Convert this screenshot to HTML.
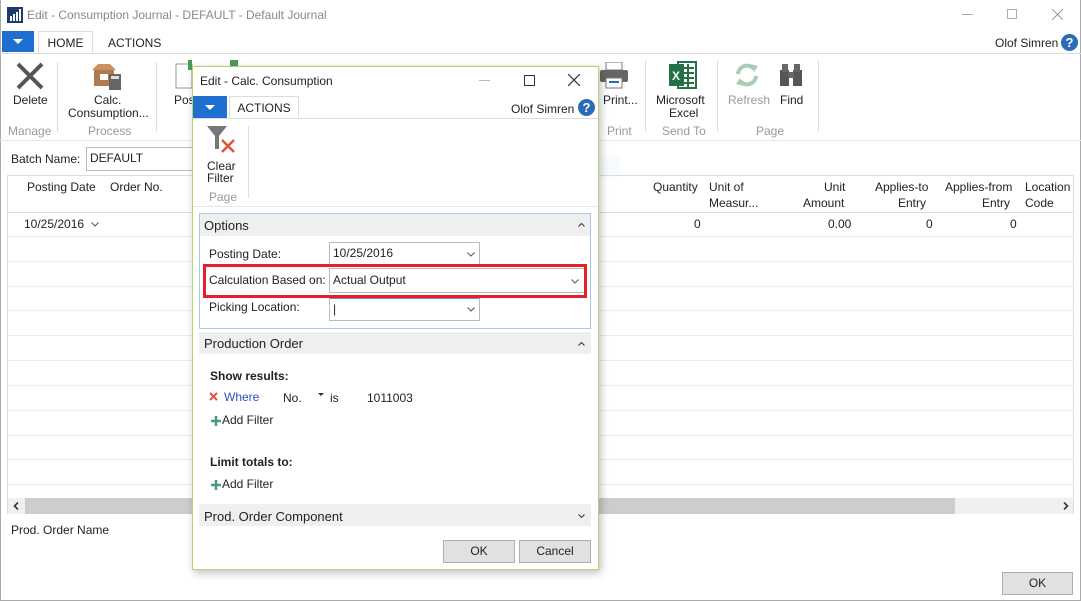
<!DOCTYPE html>
<html><head><meta charset="utf-8"><style>
*{box-sizing:border-box;margin:0;padding:0}
body{width:1081px;height:601px;overflow:hidden;background:#fff;font-family:"Liberation Sans","DejaVu Sans",sans-serif;font-size:12px;color:#222;position:relative}
.a{position:absolute;white-space:nowrap}
.g{color:#999}
.sep{position:absolute;width:1px;background:#ddd}
.hl{position:absolute;height:1px;background:#ececec}
.btn{position:absolute;background:#e1e1e1;border:1px solid #adadad;text-align:center;line-height:20px;font-size:12px}
.inp{position:absolute;border:1px solid #bbb;background:#fff;padding-left:3px;line-height:20px}
svg.dn,svg.up{position:absolute}
</style></head><body>
<div class="a" style="left:0;top:0;width:1081px;height:601px;border:1px solid #aaa;border-top:none"></div>
<svg class="a" style="left:7px;top:7px" width="16" height="16"><rect width="16" height="16" fill="#1e3a6e"/><rect x="3" y="9" width="2" height="5" fill="#fff"/><rect x="6" y="7" width="2" height="7" fill="#fff"/><rect x="9" y="5" width="2" height="9" fill="#fff"/><rect x="12" y="2" width="2" height="12" fill="#fff"/></svg>
<div class="a" style="left:27px;top:8px;font-size:12px;color:#888">Edit - Consumption Journal - DEFAULT - Default Journal</div>
<div class="a" style="left:962px;top:14px;width:11px;height:1px;background:#aaa"></div>
<div class="a" style="left:1007px;top:9px;width:10px;height:10px;border:1px solid #aaa"></div>
<svg class="a" style="left:1052px;top:9px" width="11" height="11"><path d="M0 0L11 11M11 0L0 11" stroke="#999" stroke-width="1"/></svg>
<div class="a" style="left:2px;top:31px;width:32px;height:21px;background:#1e6fcf"></div>
<div class="a" style="left:13px;top:39px;border-left:5px solid transparent;border-right:5px solid transparent;border-top:5px solid #fff"></div>
<div class="a" style="left:38px;top:31px;width:55px;height:23px;border:1px solid #ddd;border-bottom:none;background:#fff;text-align:center;line-height:22px">HOME</div>
<div class="a" style="left:108px;top:36px">ACTIONS</div>
<div class="a" style="left:0;top:53px;width:1081px;height:1px;background:#ddd"></div>
<div class="a" style="left:995px;top:36px">Olof Simren</div>
<div class="a" style="left:1061px;top:34px;width:17px;height:17px;border-radius:50%;background:#2b6cb8;color:#fff;font-weight:bold;text-align:center;line-height:17px;font-size:13px">?</div>
<svg class="a" style="left:15px;top:62px" width="30" height="28"><path d="M3 2 L27 26 M27 2 L3 26" stroke="#555" stroke-width="4"/></svg>
<div class="a" style="left:13px;top:93px">Delete</div>
<div class="a g" style="left:8px;top:124px">Manage</div>
<div class="sep" style="left:57px;top:62px;height:70px"></div>
<svg class="a" style="left:92px;top:62px" width="32" height="28"><rect x="2" y="8" width="20" height="16" fill="#b07a50"/><path d="M0 8 L6 2 L18 2 L24 8Z" fill="#c9915f"/><rect x="8" y="12" width="8" height="6" fill="#fff"/><rect x="17" y="12" width="12" height="16" fill="#666"/><rect x="19" y="14" width="8" height="3" fill="#ddd"/></svg>
<div class="a" style="left:94px;top:93px">Calc.</div>
<div class="a" style="left:68px;top:106px">Consumption...</div>
<div class="a g" style="left:88px;top:124px">Process</div>
<div class="sep" style="left:156px;top:62px;height:70px"></div>
<svg class="a" style="left:175px;top:60px" width="80" height="30"><rect x="1" y="4" width="16" height="24" fill="#fff" stroke="#999"/><rect x="13" y="0" width="4" height="10" fill="#4a9a5a"/><rect x="55" y="0" width="8" height="6" fill="#4a9a5a"/></svg>
<div class="a" style="left:174px;top:93px">Pos</div>
<svg class="a" style="left:598px;top:62px" width="34" height="28"><rect x="8" y="0" width="16" height="8" fill="#fff" stroke="#777"/><rect x="2" y="8" width="28" height="12" rx="2" fill="#666"/><rect x="8" y="16" width="16" height="10" fill="#fff" stroke="#777"/><rect x="11" y="19" width="10" height="2" fill="#2b6cb8"/></svg>
<div class="a" style="left:603px;top:93px">Print...</div>
<div class="a g" style="left:607px;top:124px">Print</div>
<div class="sep" style="left:645px;top:60px;height:72px"></div>
<svg class="a" style="left:668px;top:60px" width="30" height="30"><rect x="10" y="2" width="18" height="26" fill="#fff" stroke="#217346" stroke-width="2"/><path d="M14 8h12M14 13h12M14 18h12M14 23h12M20 4v24" stroke="#217346" stroke-width="2"/><rect x="1" y="4" width="15" height="22" fill="#217346"/><text x="4" y="20" fill="#fff" font-size="12" font-weight="bold" font-family="Liberation Sans">X</text></svg>
<div class="a" style="left:656px;top:93px">Microsoft</div>
<div class="a" style="left:669px;top:106px">Excel</div>
<div class="a g" style="left:662px;top:124px">Send To</div>
<div class="sep" style="left:717px;top:60px;height:72px"></div>
<svg class="a" style="left:733px;top:62px" width="28" height="26"><path d="M5 12 A9 9 0 0 1 21 7 M23 14 A9 9 0 0 1 7 19" stroke="#a8cdb8" stroke-width="4" fill="none"/><path d="M17 2 L25 4 L21 10Z M11 24 L3 22 L7 16Z" fill="#a8cdb8"/></svg>
<div class="a g" style="left:728px;top:93px">Refresh</div>
<svg class="a" style="left:778px;top:62px" width="26" height="26"><rect x="2" y="8" width="9" height="16" fill="#555"/><rect x="15" y="8" width="9" height="16" fill="#555"/><rect x="4" y="2" width="6" height="8" fill="#666"/><rect x="16" y="2" width="6" height="8" fill="#666"/><rect x="10" y="10" width="6" height="6" fill="#666"/></svg>
<div class="a" style="left:780px;top:93px">Find</div>
<div class="a g" style="left:756px;top:124px">Page</div>
<div class="sep" style="left:818px;top:60px;height:72px"></div>
<div class="a" style="left:0;top:140px;width:1081px;height:1px;background:#e6e6e6"></div>
<div class="a" style="left:11px;top:152px">Batch Name:</div>
<div class="inp" style="left:86px;top:147px;width:120px;height:24px">DEFAULT</div>
<div class="a" style="left:468px;top:157px;width:152px;height:20px;background:#f7fbff"></div>
<div class="a" style="left:494px;top:160px;color:#e8eef4">Window Snip</div>
<div class="a" style="left:7px;top:175px;width:1067px;height:339px;border:1px solid #ddd"></div>
<div class="a" style="left:27px;top:180px">Posting Date</div>
<div class="a" style="left:110px;top:180px">Order No.</div>
<div class="a" style="left:653px;top:180px">Quantity</div>
<div class="a" style="left:709px;top:180px">Unit of</div>
<div class="a" style="left:709px;top:196px">Measur...</div>
<div class="a" style="left:824px;top:180px">Unit</div>
<div class="a" style="left:803px;top:196px">Amount</div>
<div class="a" style="left:875px;top:180px">Applies-to</div>
<div class="a" style="left:898px;top:196px">Entry</div>
<div class="a" style="left:945px;top:180px">Applies-from</div>
<div class="a" style="left:982px;top:196px">Entry</div>
<div class="a" style="left:1025px;top:180px">Location</div>
<div class="a" style="left:1025px;top:196px">Code</div>
<div class="a" style="left:8px;top:212px;width:1065px;height:1px;background:#ddd"></div>
<div class="a" style="left:24px;top:217px">10/25/2016</div>
<svg class="dn" style="left:91px;top:222px" width="8" height="5"><path d="M0.5 0.5L4 4L7.5 0.5" stroke="#555" fill="none"/></svg>
<div class="a" style="left:694px;top:217px">0</div>
<div class="a" style="left:828px;top:217px">0.00</div>
<div class="a" style="left:926px;top:217px">0</div>
<div class="a" style="left:1010px;top:217px">0</div>
<div class="hl" style="left:8px;top:236px;width:1065px"></div>
<div class="hl" style="left:8px;top:261px;width:1065px"></div>
<div class="hl" style="left:8px;top:286px;width:1065px"></div>
<div class="hl" style="left:8px;top:310px;width:1065px"></div>
<div class="hl" style="left:8px;top:335px;width:1065px"></div>
<div class="hl" style="left:8px;top:360px;width:1065px"></div>
<div class="hl" style="left:8px;top:385px;width:1065px"></div>
<div class="hl" style="left:8px;top:410px;width:1065px"></div>
<div class="hl" style="left:8px;top:435px;width:1065px"></div>
<div class="hl" style="left:8px;top:459px;width:1065px"></div>
<div class="hl" style="left:8px;top:484px;width:1065px"></div>
<div class="a" style="left:8px;top:498px;width:1065px;height:16px;background:#f0f0f0"></div>
<div class="a" style="left:25px;top:498px;width:930px;height:16px;background:#cdcdcd"></div>
<svg class="a" style="left:13px;top:502px" width="6" height="8"><path d="M5 0.5L1.5 4L5 7.5" stroke="#333" stroke-width="1.6" fill="none"/></svg>
<svg class="a" style="left:1063px;top:502px" width="6" height="8"><path d="M1 0.5L4.5 4L1 7.5" stroke="#333" stroke-width="1.6" fill="none"/></svg>
<div class="a" style="left:11px;top:523px">Prod. Order Name</div>
<div class="btn" style="left:1002px;top:572px;width:71px;height:23px">OK</div>

<div class="a" style="left:192px;top:66px;width:407px;height:504px;background:#fff;border:1px solid #b5d56a;box-shadow:2px 3px 8px rgba(0,0,0,.25)"></div>
<div class="a" style="left:200px;top:74px;font-size:12px">Edit - Calc. Consumption</div>
<div class="a" style="left:479px;top:80px;width:11px;height:1px;background:#bbb"></div>
<div class="a" style="left:524px;top:75px;width:11px;height:11px;border:1px solid #333"></div>
<svg class="a" style="left:568px;top:74px" width="12" height="12"><path d="M0 0L12 12M12 0L0 12" stroke="#333" stroke-width="1.2"/></svg>
<div class="a" style="left:193px;top:96px;width:34px;height:22px;background:#1e6fcf"></div>
<div class="a" style="left:205px;top:105px;border-left:5px solid transparent;border-right:5px solid transparent;border-top:5px solid #fff"></div>
<div class="a" style="left:229px;top:96px;width:70px;height:23px;border:1px solid #ddd;border-bottom:none;background:#fff;text-align:center;line-height:22px">ACTIONS</div>
<div class="a" style="left:193px;top:118px;width:405px;height:1px;background:#ddd"></div>
<div class="a" style="left:511px;top:102px">Olof Simren</div>
<div class="a" style="left:578px;top:99px;width:17px;height:17px;border-radius:50%;background:#2b6cb8;color:#fff;font-weight:bold;text-align:center;line-height:17px;font-size:13px">?</div>
<svg class="a" style="left:206px;top:125px" width="32" height="32"><path d="M1 1 H21 L13 11 V24 H9 V11Z" fill="#777"/><path d="M16 15 L28 27 M28 15 L16 27" stroke="#e0553a" stroke-width="2.5"/></svg>
<div class="a" style="left:207px;top:159px">Clear</div>
<div class="a" style="left:207px;top:171px">Filter</div>
<div class="a g" style="left:209px;top:190px">Page</div>
<div class="sep" style="left:248px;top:126px;height:72px"></div>
<div class="a" style="left:193px;top:206px;width:405px;height:1px;background:#e6e6e6"></div>
<div class="a" style="left:199px;top:213px;width:392px;height:116px;border:1px solid #a9c6ea"></div>
<div class="a" style="left:200px;top:214px;width:390px;height:22px;background:#efefef"></div>
<div class="a" style="left:204px;top:218px;font-size:13px">Options</div>
<svg class="up" style="left:578px;top:223px" width="7" height="4"><path d="M0.5 3.5L3.5 0.5L6.5 3.5" stroke="#333" fill="none"/></svg>
<div class="a" style="left:209px;top:247px">Posting Date:</div>
<div class="inp" style="left:329px;top:242px;width:151px;height:23px">10/25/2016</div>
<svg class="dn" style="left:467px;top:252px" width="8" height="5"><path d="M0.5 0.5L4 4L7.5 0.5" stroke="#555" fill="none"/></svg>
<div class="a" style="left:209px;top:273px">Calculation Based on:</div>
<div class="inp" style="left:329px;top:268px;width:257px;height:25px;line-height:23px">Actual Output</div>
<svg class="dn" style="left:571px;top:279px" width="8" height="5"><path d="M0.5 0.5L4 4L7.5 0.5" stroke="#555" fill="none"/></svg>
<div class="a" style="left:203px;top:264px;width:384px;height:34px;border:3px solid #e3202b"></div>
<div class="a" style="left:209px;top:300px">Picking Location:</div>
<div class="inp" style="left:329px;top:298px;width:151px;height:23px;border-top-color:#7a8ad0">|</div>
<svg class="dn" style="left:467px;top:307px" width="8" height="5"><path d="M0.5 0.5L4 4L7.5 0.5" stroke="#555" fill="none"/></svg>
<div class="a" style="left:199px;top:332px;width:392px;height:22px;background:#efefef"></div>
<div class="a" style="left:204px;top:336px;font-size:13px">Production Order</div>
<svg class="up" style="left:578px;top:342px" width="7" height="4"><path d="M0.5 3.5L3.5 0.5L6.5 3.5" stroke="#333" fill="none"/></svg>
<div class="a" style="left:210px;top:369px;font-weight:bold">Show results:</div>
<svg class="a" style="left:209px;top:392px" width="9" height="9"><path d="M1 1L8 8M8 1L1 8" stroke="#e0553a" stroke-width="2"/></svg>
<div class="a" style="left:224px;top:390px;color:#2b50c8">Where</div>
<div class="a" style="left:283px;top:391px">No.</div>
<div class="a" style="left:318px;top:393px;border-left:3px solid transparent;border-right:3px solid transparent;border-top:3px solid #333"></div>
<div class="a" style="left:330px;top:391px">is</div>
<div class="a" style="left:367px;top:391px">1011003</div>
<svg class="a" style="left:210px;top:415px" width="12" height="12"><path d="M6 1V11M1 6H11" stroke="#4a9a7a" stroke-width="2.5"/></svg>
<div class="a" style="left:222px;top:413px">Add Filter</div>
<div class="a" style="left:210px;top:455px;font-weight:bold">Limit totals to:</div>
<svg class="a" style="left:210px;top:479px" width="12" height="12"><path d="M6 1V11M1 6H11" stroke="#4a9a7a" stroke-width="2.5"/></svg>
<div class="a" style="left:222px;top:477px">Add Filter</div>
<div class="a" style="left:199px;top:504px;width:392px;height:22px;background:#efefef"></div>
<div class="a" style="left:204px;top:509px;font-size:13px">Prod. Order Component</div>
<svg class="dn" style="left:578px;top:514px" width="7" height="4"><path d="M0.5 0.5L3.5 3.5L6.5 0.5" stroke="#333" fill="none"/></svg>
<div class="btn" style="left:443px;top:540px;width:72px;height:23px">OK</div>
<div class="btn" style="left:519px;top:540px;width:72px;height:23px">Cancel</div>
</body></html>
